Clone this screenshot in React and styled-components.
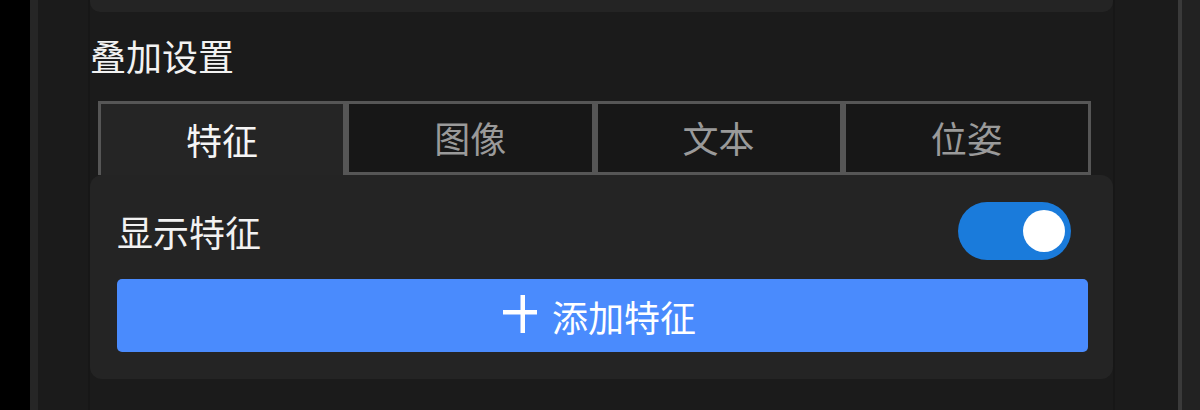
import React, { useState } from 'react';
import styled, { createGlobalStyle } from 'styled-components';

// --- GLOBAL STYLES ---
const GlobalStyle = createGlobalStyle`
    html, body {
        margin: 0;
        padding: 0;
        background-color: #000000;
        font-family: "Noto Sans CJK SC", "Noto Sans", sans-serif;
    }
    * {
        box-sizing: border-box;
    }
`;

// --- Layout ---
const Screen = styled.div`
    display: flex;
    width: 1200px;
    height: 410px;
    overflow: hidden;
    background-color: #000000;
`;
const Gutter = styled.div`
    width: 30px;
    flex-shrink: 0;
    background-color: #000000;
`;
const SidePanel = styled.div`
    width: 1148px;
    flex-shrink: 0;
    display: flex;
    background-color: #1b1b1b;
    border-left: 8px solid #262626;
    padding-left: 50px;
`;
const Splitter = styled.div`
    width: 4px;
    flex-shrink: 0;
    background-color: #3a3a3a;
`;
const Viewport = styled.div`
    flex: 1;
    background-color: #222222;
`;
const ScrollColumn = styled.div`
    width: 1027px;
    display: flex;
    flex-direction: column;
    border-left: 2px solid #171717;
    border-right: 2px solid #171717;
`;

// --- Cards ---
const CardTail = styled.div`
    height: 12px;
    background-color: #242424;
    border-radius: 0 0 10px 10px;
`;
const SectionTitle = styled.h2`
    margin: 20px 0 23px 0;
    font-size: 36px;
    line-height: 46px;
    font-weight: 400;
    color: #f2f2f2;
`;
const Card = styled.div`
    display: flex;
    flex-direction: column;
    gap: 19px;
    padding: 27px 25px 27px 27px;
    background-color: #242424;
    border-radius: 12px;
`;

// --- Tabs ---
const TabBar = styled.div`
    display: grid;
    grid-template-columns: repeat(4, 1fr);
    height: 74px;
    margin: 0 22px 0 8px;
`;
const Tab = styled.button`
    display: flex;
    align-items: center;
    justify-content: center;
    padding: 0 0 2px 0;
    font-family: inherit;
    font-size: 36px;
    font-weight: 400;
    border: 3px solid #565656;
    border-bottom: ${p => (p.$active ? 'none' : '3px solid #565656')};
    background-color: ${p => (p.$active ? '#252525' : '#171717')};
    color: ${p => (p.$active ? '#f5f5f5' : '#9a9a9a')};
    cursor: pointer;
`;

// --- Row & controls ---
const Row = styled.div`
    display: flex;
    align-items: center;
    justify-content: space-between;
    height: 58px;
    padding-right: 17px;
`;
const Label = styled.span`
    font-size: 36px;
    color: #f2f2f2;
`;
const SwitchTrack = styled.button`
    position: relative;
    width: 113px;
    height: 58px;
    padding: 0;
    border: none;
    border-radius: 29px;
    background-color: ${p => (p.$on ? '#1a7bdb' : '#555555')};
    cursor: pointer;
`;
const SwitchKnob = styled.span`
    position: absolute;
    top: 8px;
    left: ${p => (p.$on ? '65px' : '6px')};
    width: 42px;
    height: 42px;
    border-radius: 50%;
    background-color: #ffffff;
`;
const AddButton = styled.button`
    display: flex;
    align-items: center;
    justify-content: center;
    gap: 15px;
    height: 73px;
    padding: 0 6px 0 0;
    border: none;
    border-radius: 5px;
    background-color: #4a8bfd;
    color: #ffffff;
    font-family: inherit;
    font-size: 36px;
    cursor: pointer;
`;

const PlusIcon = () => (
    <svg width="34" height="40" viewBox="0 0 34 40" style={{ marginTop: '-4px' }}>
        <rect x="0" y="16" width="34" height="4.5" fill="#ffffff" />
        <rect x="17.5" y="1" width="4.5" height="38" fill="#ffffff" />
    </svg>
);

const TABS = ['特征', '图像', '文本', '位姿'];

const App = () => {
    const [tab, setTab] = useState(0);
    const [showFeatures, setShowFeatures] = useState(true);

    return (
        <Screen>
            <GlobalStyle />
            <Gutter />
            <SidePanel>
                <ScrollColumn>
                    <CardTail />
                    <SectionTitle>叠加设置</SectionTitle>
                    <TabBar>
                        {TABS.map((t, i) => (
                            <Tab key={t} $active={i === tab} onClick={() => setTab(i)}>
                                {t}
                            </Tab>
                        ))}
                    </TabBar>
                    <Card>
                        <Row>
                            <Label>显示特征</Label>
                            <SwitchTrack $on={showFeatures} onClick={() => setShowFeatures(v => !v)}>
                                <SwitchKnob $on={showFeatures} />
                            </SwitchTrack>
                        </Row>
                        <AddButton>
                            <PlusIcon />
                            添加特征
                        </AddButton>
                    </Card>
                </ScrollColumn>
            </SidePanel>
            <Splitter />
            <Viewport />
        </Screen>
    );
};

export default App;
